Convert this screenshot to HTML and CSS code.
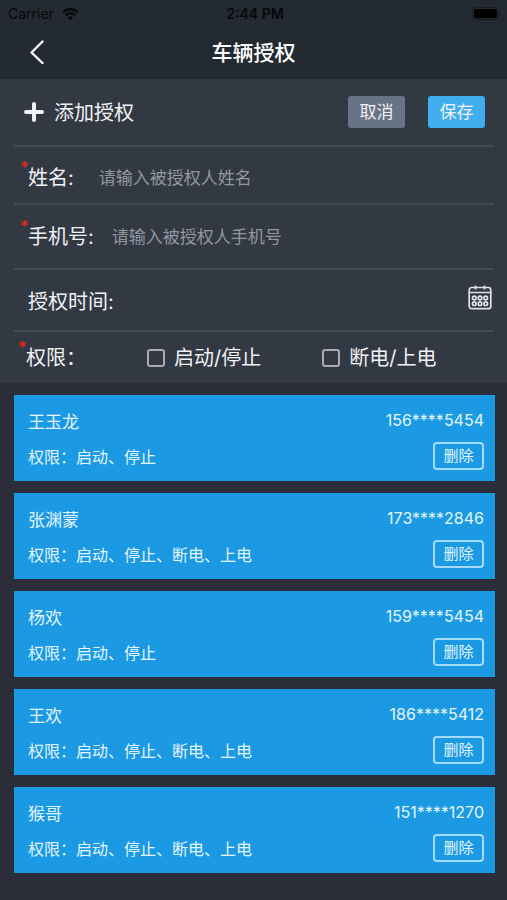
FILE: index.html
```html
<!DOCTYPE html>
<html lang="zh-CN">
<head>
<meta charset="utf-8">
<meta name="viewport" content="width=device-width, initial-scale=1">
<title>车辆授权</title>
<link rel="stylesheet" href="styles.css">
</head>
<body>
<header class="top">
  <div class="status">
    <div class="carrier">Carrier
      <svg class="wifi" width="17" height="12" viewBox="0 0 17 12" fill="none" stroke="currentColor" stroke-width="2.4" aria-hidden="true"><path d="M1 4.300Q8.500-2 16 4.300M3.700 7.200Q8.500 3.200 13.300 7.200"/><path d="M5.800 9.200Q8.500 7.200 11.200 9.200L8.500 12Z" fill="currentColor" stroke="none"/></svg>
    </div>
    <div class="time">2:44 PM</div>
    <svg class="battery" width="30" height="14" viewBox="0 0 30 14" aria-hidden="true"><rect x="0.500" y="0.500" width="26" height="12" rx="3" fill="none" stroke="#171c21"/><rect x="2" y="2" width="23" height="9" rx="1.500" fill="#000"/><path d="M28 4.500q2 2 0 4z" fill="#171c21"/></svg>
  </div>
  <div class="nav">
    <button class="back" type="button" aria-label="返回"><svg width="16" height="26" viewBox="0 0 16 26" fill="none" stroke="currentColor" stroke-width="2.400" stroke-linecap="round" stroke-linejoin="round"><path d="M13.500 1.500L2.500 12.500L13.500 23"/></svg></button>
    <h1>车辆授权</h1>
  </div>
</header>
<main>
  <form class="form">
    <div class="row row-add">
      <svg class="plus" width="20" height="20" viewBox="0 0 20 20" stroke="currentColor" stroke-width="4" stroke-linecap="round" aria-hidden="true"><path d="M10 2V18M2 10H18"/></svg>
      <h2>添加授权</h2>
      <button class="btn cancel" type="button">取消</button>
      <button class="btn save" type="submit">保存</button>
    </div>
    <div class="row row-name">
      <label class="required" for="name">姓名:</label>
      <input class="text" id="name" type="text" placeholder="请输入被授权人姓名">
    </div>
    <div class="row row-phone">
      <label class="required" for="phone">手机号:</label>
      <input class="text near" id="phone" type="tel" placeholder="请输入被授权人手机号">
    </div>
    <div class="row row-time">
      <label for="date">授权时间:</label>
      <input class="text" id="date" type="text">
      <button class="calendar" type="button" aria-label="选择时间"><svg width="24" height="25" viewBox="0 0 24 25" fill="none" stroke="currentColor" stroke-width="1.700"><rect x="1.200" y="2.500" width="21.600" height="21.200" rx="2.500"/><path d="M1.200 7.500H22.800M7.500 0.500V4.500M16.500 0.500V4.500"/><g stroke-width="1.700"><circle cx="6.300" cy="13" r="1.800"/><circle cx="12" cy="13" r="1.800"/><circle cx="17.700" cy="13" r="1.800"/><circle cx="6.300" cy="18.700" r="1.800"/><circle cx="12" cy="18.700" r="1.800"/><circle cx="17.700" cy="18.700" r="1.800"/></g></svg></button>
    </div>
    <div class="row row-perm">
      <span class="required">权限：</span>
      <label class="check"><input type="checkbox">启动/停止</label>
      <label class="check"><input type="checkbox">断电/上电</label>
    </div>
  </form>
  <ul class="list">
    <li class="card"><div class="line"><span class="name">王玉龙</span><span class="tel">156****5454</span></div><div class="line"><span class="perm">权限：启动、停止</span><button class="delete" type="button">删除</button></div></li>
    <li class="card"><div class="line"><span class="name">张渊蒙</span><span class="tel">173****2846</span></div><div class="line"><span class="perm">权限：启动、停止、断电、上电</span><button class="delete" type="button">删除</button></div></li>
    <li class="card"><div class="line"><span class="name">杨欢</span><span class="tel">159****5454</span></div><div class="line"><span class="perm">权限：启动、停止</span><button class="delete" type="button">删除</button></div></li>
    <li class="card"><div class="line"><span class="name">王欢</span><span class="tel">186****5412</span></div><div class="line"><span class="perm">权限：启动、停止、断电、上电</span><button class="delete" type="button">删除</button></div></li>
    <li class="card"><div class="line"><span class="name">猴哥</span><span class="tel">151****1270</span></div><div class="line"><span class="perm">权限：启动、停止、断电、上电</span><button class="delete" type="button">删除</button></div></li>
  </ul>
</main>
</body>
</html>
```
FILE: styles.css
```css
* { box-sizing: border-box; }
body {
  margin: 0;
  min-height: 100vh;
  background: #2b2e39;
  color: #f0f2f5;
  font-family: Inter, "Noto Sans CJK SC", sans-serif;
}
button, input { font: inherit; color: inherit; }
button { padding: 0; border: 0; background: none; cursor: pointer; }
h1, h2 { margin: 0; }
svg { display: block; }

.top { background: #232a31; }
.status {
  display: grid;
  grid-template-columns: 1fr auto 1fr;
  align-items: center;
  height: 27px;
  padding: 0 5px 0 8px;
  color: #06080a;
  font-size: 14px;
}
.carrier { display: flex; align-items: center; gap: 8px; }
.time { font-weight: 600; }
.battery { justify-self: end; }
.nav {
  display: grid;
  grid-template-columns: 1fr auto 1fr;
  align-items: center;
  height: 52px;
  padding: 0 29px;
}
.back { justify-self: start; color: #fff; }
.nav h1 { font-size: 21px; font-weight: 500; line-height: 32px; color: #fff; }

.form { padding: 0 13px 0 14px; background: #323943; }
.row {
  display: flex;
  align-items: center;
  padding-left: 14px;
  border-bottom: 2px solid #434a53;
  font-size: 20px;
  line-height: 28px;
}
.row-add { height: 68px; padding: 0 9px 0 10px; }
.row-name { height: 58px; padding-top: 5px; }
.row-phone { height: 65px; }
.row-time { height: 62px; padding-top: 4px; }
.row-perm { height: 51px; padding-left: 12px; border-bottom: 0; }
.row h2 { flex: 1; margin-left: 10px; padding-top: 2px; font-size: 20px; font-weight: 400; line-height: 28px; }
.btn { width: 57px; height: 32px; border-radius: 3px; font-size: 17px; line-height: 24px; }
.cancel { margin-right: 23px; background: #697386; }
.save { background: #40adee; }
.required { position: relative; }
.required::before {
  content: "*";
  position: absolute;
  left: -8px;
  top: -7px;
  color: #e62817;
  font-size: 16px;
  font-weight: 600;
  line-height: 20px;
}
.text {
  flex: 1;
  min-width: 0;
  height: 32px;
  margin-left: 25px;
  padding: 0;
  border: 0;
  outline: 0;
  background: none;
  font-size: 17px;
}
.near { margin-left: 18px; }
.text::placeholder { color: #9297a0; opacity: 1; }
.calendar { align-self: flex-start; margin: 11px 2px 0 0; color: #dfe2e7; }
.check { display: flex; align-items: center; gap: 9px; margin-left: 61px; }
.check input {
  appearance: none;
  width: 18px;
  height: 18px;
  margin: 0;
  border: 2px solid #a7acb4;
  border-radius: 3px;
}
.check input:checked { background: #40adee; }

.list {
  display: grid;
  gap: 12px;
  margin: 0;
  padding: 12px 12px 27px 14px;
  list-style: none;
}
.card { padding: 10px 11px 11px 14px; background: #1b99e2; color: #e3f6ff; }
.line { display: flex; align-items: center; justify-content: space-between; height: 30px; }
.line + .line { height: 28px; margin-top: 7px; }
.name { font-size: 17px; }
.tel { font-size: 16px; }
.perm { font-size: 16px; }
.delete {
  width: 51px;
  height: 28px;
  border: 2px solid #a3dcfa;
  border-radius: 4px;
  font-size: 15px;
  line-height: 20px;
}
```
